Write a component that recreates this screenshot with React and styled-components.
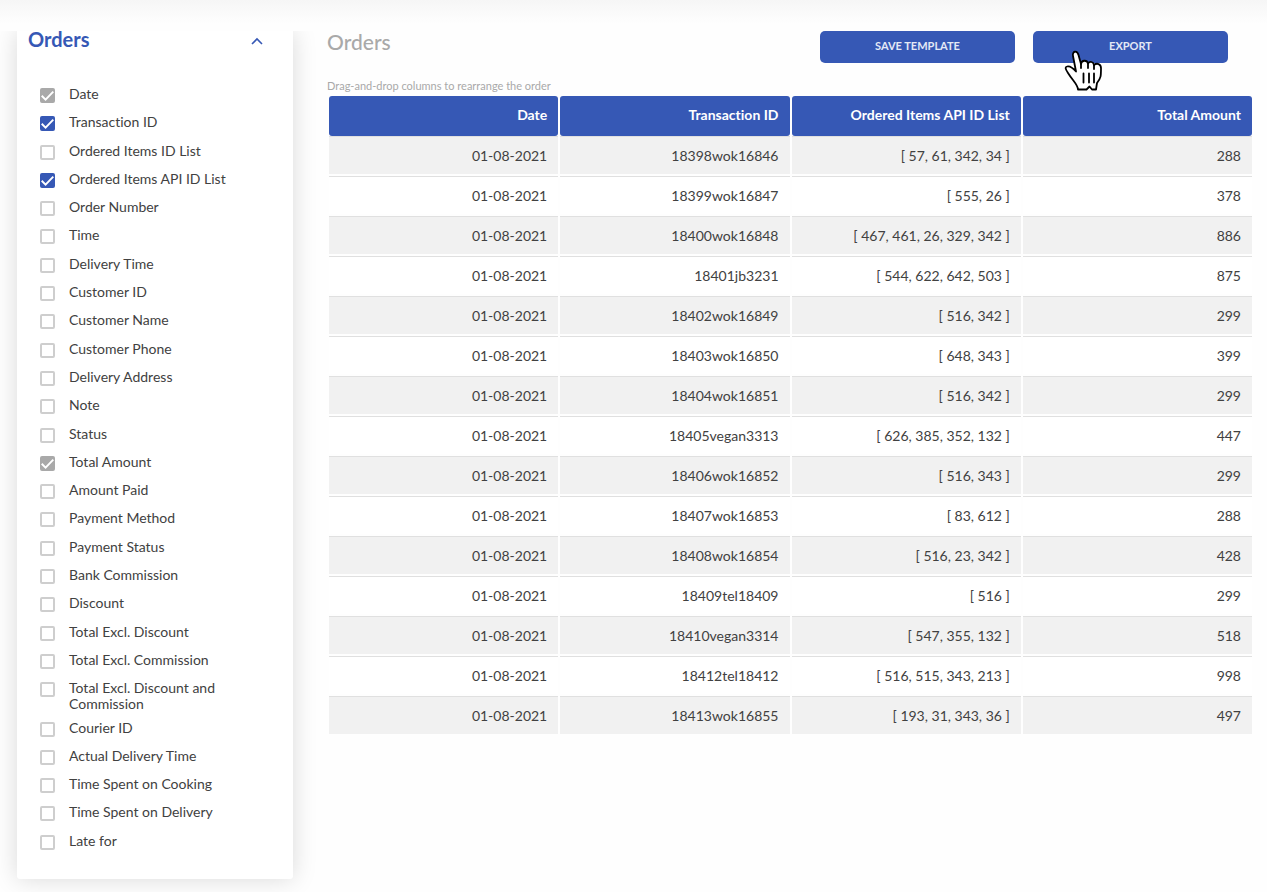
import React, { useState } from 'react';
import styled, { createGlobalStyle } from 'styled-components';

const GlobalStyle = createGlobalStyle`
  * {
    box-sizing: border-box;
  }
  body {
    margin: 0;
    background: #fefefe;
    color: #414141;
    font-family: Lato, "Liberation Sans", sans-serif;
    font-variant-ligatures: none;
  }
`;
const Page = styled.div`
  display: flex;
  flex-direction: column;
  min-height: 100vh;
`;
const TopShade = styled.header`
  flex: none;
  height: 31px;
  background: linear-gradient(#f6f6f6, #fefefe 24px);
`;
const Content = styled.main`
  display: flex;
  flex: 1;
  gap: 34px;
  padding: 0 13px 13px 17px;
`;
const Sidebar = styled.aside`
  position: relative;
  isolation: isolate;
  display: flex;
  flex-direction: column;
  flex: none;
  width: 276px;
  padding: 0 24px 25px 11px;

  /* the shadow must not spill over the top bar or past the page end */
  &::before {
    content: '';
    position: absolute;
    inset: 0;
    z-index: -1;
    border-radius: 0 0 3px 3px;
    background: #fff;
    box-shadow: 0 0 24px rgba(0, 0, 0, 0.15);
    clip-path: inset(0 -30px -13px -17px);
  }
`;
const SidebarTitle = styled.button`
  display: flex;
  align-items: center;
  justify-content: space-between;
  margin-bottom: 39px;
  padding: 0;
  border: 0;
  background: none;
  color: #3658b5;
  font: 700 20px/14px Lato, sans-serif;
  cursor: pointer;

  svg {
    margin-top: 4px;
  }
`;
const FieldList = styled.ul`
  display: flex;
  flex: 1;
  flex-direction: column;
  justify-content: space-between;
  margin: 0;
  padding: 0 0 0 12px;
  list-style: none;
`;
const Field = styled.label`
  display: flex;
  align-items: flex-start;
  gap: 14px;
  min-height: 21px;
  font-size: 14px;
  line-height: 16px;
`;
const FieldName = styled.span`
  max-width: 170px;
`;
const CheckWrap = styled.span`
  display: grid;
  flex: none;
  padding-top: 2px;

  & > * {
    grid-area: 1 / 1;
  }
  svg {
    pointer-events: none;
  }
`;
const Check = styled.input`
  appearance: none;
  width: 15px;
  height: 15px;
  margin: 0;
  border: 2px solid #cecece;
  border-radius: 2px;
  background: #fff;

  &:checked {
    border-color: #3658b5;
    background: #3658b5;
  }
  &:checked:disabled {
    border-color: #a9a9a9;
    background: #a9a9a9;
  }
`;
const Report = styled.section`
  flex: 1;
  min-width: 0;
`;
const ReportHead = styled.div`
  display: flex;
  justify-content: space-between;
  height: 47px;
  padding-right: 26px;
`;
const Title = styled.h1`
  margin: 0;
  color: #a9a9a9;
  font-size: 21px;
  font-weight: 500;
  line-height: 22px;
`;
const Actions = styled.div`
  display: flex;
  gap: 18px;
`;
const ActionButton = styled.button`
  width: 195px;
  height: 32px;
  padding: 0 0 3px;
  border: 0;
  border-radius: 5px;
  background: #3658b5;
  color: #e4e9f6;
  font: 700 11px Lato, sans-serif;
  text-transform: uppercase;
  cursor: pointer;
`;
const Hint = styled.p`
  margin: 0 0 3px;
  color: #a9a9a9;
  font-size: 11px;
  line-height: 15px;
`;
const Table = styled.table`
  width: 100%;
  table-layout: fixed;
  border-collapse: separate;
  border-spacing: 2px 0;
  text-align: right;
`;
const HeadCell = styled.th`
  height: 40px;
  padding: 0 11px 4px;
  border-radius: 3px;
  background: #3658b5;
  color: #fff;
  font-size: 14px;
  font-weight: 700;
  cursor: move;
`;
const Row = styled.tr`
  td {
    background: ${(props) => (props.$odd ? '#f1f1f1' : '#fff')};
  }
`;
const Cell = styled.td`
  height: 40px;
  padding: 0 11px;
  border-top: 1px solid #e0e0e0;
  border-bottom: 2px solid #fefefe;
  font-size: 14px;
`;
const Cursor = styled.svg`
  position: absolute;
  top: 50px;
  left: 1064px;
  pointer-events: none;
`;

const fields = [
  'Date',
  'Transaction ID',
  'Ordered Items ID List',
  'Ordered Items API ID List',
  'Order Number',
  'Time',
  'Delivery Time',
  'Customer ID',
  'Customer Name',
  'Customer Phone',
  'Delivery Address',
  'Note',
  'Status',
  'Total Amount',
  'Amount Paid',
  'Payment Method',
  'Payment Status',
  'Bank Commission',
  'Discount',
  'Total Excl. Discount',
  'Total Excl. Commission',
  'Total Excl. Discount and Commission',
  'Courier ID',
  'Actual Delivery Time',
  'Time Spent on Cooking',
  'Time Spent on Delivery',
  'Late for',
];
// these two are always part of the report
const required = ['Date', 'Total Amount'];

const columns = ['Date', 'Transaction ID', 'Ordered Items API ID List', 'Total Amount'];

const orders = [
  ['18398wok16846', [57, 61, 342, 34], 288],
  ['18399wok16847', [555, 26], 378],
  ['18400wok16848', [467, 461, 26, 329, 342], 886],
  ['18401jb3231', [544, 622, 642, 503], 875],
  ['18402wok16849', [516, 342], 299],
  ['18403wok16850', [648, 343], 399],
  ['18404wok16851', [516, 342], 299],
  ['18405vegan3313', [626, 385, 352, 132], 447],
  ['18406wok16852', [516, 343], 299],
  ['18407wok16853', [83, 612], 288],
  ['18408wok16854', [516, 23, 342], 428],
  ['18409tel18409', [516], 299],
  ['18410vegan3314', [547, 355, 132], 518],
  ['18412tel18412', [516, 515, 343, 213], 998],
  ['18413wok16855', [193, 31, 343, 36], 497],
];

const App = () => {
  const [open, setOpen] = useState(true);
  const [checked, setChecked] = useState([...required, 'Transaction ID', 'Ordered Items API ID List']);

  const toggle = (name) => {
    setChecked(checked.includes(name) ? checked.filter((item) => item !== name) : [...checked, name]);
  };

  return (
    <Page>
      <GlobalStyle />
      <TopShade />
      <Content>
        <Sidebar>
          <SidebarTitle type="button" aria-expanded={open} onClick={() => setOpen(!open)}>
            Orders
            <svg width="24" height="12" viewBox="0 0 24 12" fill="none" stroke="#3658b5" strokeWidth="1.6">
              <path d="M7 9l5-5 5 5" />
            </svg>
          </SidebarTitle>
          {open && (
            <FieldList>
              {fields.map((name) => (
                <li key={name}>
                  <Field>
                    <CheckWrap>
                      <Check
                        type="checkbox"
                        checked={checked.includes(name)}
                        disabled={required.includes(name)}
                        onChange={() => toggle(name)}
                      />
                      {checked.includes(name) && (
                        <svg width="15" height="15" viewBox="0 0 14 14" fill="none" stroke="#fff" strokeWidth="1.8">
                          <path d="M1.6 7.2l3.6 3.6 7.2-7.4" />
                        </svg>
                      )}
                    </CheckWrap>
                    <FieldName>{name}</FieldName>
                  </Field>
                </li>
              ))}
            </FieldList>
          )}
        </Sidebar>
        <Report>
          <ReportHead>
            <Title>Orders</Title>
            <Actions>
              <ActionButton type="button">Save template</ActionButton>
              <ActionButton type="button">Export</ActionButton>
            </Actions>
          </ReportHead>
          <Hint>Drag-and-drop columns to rearrange the order</Hint>
          <Table>
            <thead>
              <tr>
                {columns.map((name) => (
                  <HeadCell key={name} scope="col" draggable>{name}</HeadCell>
                ))}
              </tr>
            </thead>
            <tbody>
              {orders.map(([id, items, total], idx) => (
                <Row key={id} $odd={idx % 2 === 0}>
                  <Cell>01-08-2021</Cell>
                  <Cell>{id}</Cell>
                  <Cell>{`[ ${items.join(', ')} ]`}</Cell>
                  <Cell>{total}</Cell>
                </Row>
              ))}
            </tbody>
          </Table>
        </Report>
      </Content>
      <Cursor width="40" height="42" viewBox="0 0 40 42" fill="#fff" stroke="#000" strokeWidth="1.8" strokeLinejoin="round" strokeLinecap="round">
        <path d="M14 39.5C14 35 9 31 4 23C1 18.500 1 17 3 16.500C6 15.500 9 18 12 21.500L9 6C8 1 13 0 14.500 5L17 14C17.500 10 23 9.500 24 13.500C26 10.500 29.500 12 30 15C33 12.500 37 14 37 18C37 26 37 28 33 33L32 39.500H28L25.500 36.500L22.500 39.500Z" />
        <path d="M17 14V18M24 13.500V18M30 15V19M19.500 23.500v9M25 23.500v9M30 23.500v9" />
      </Cursor>
    </Page>
  );
};
export default App;
